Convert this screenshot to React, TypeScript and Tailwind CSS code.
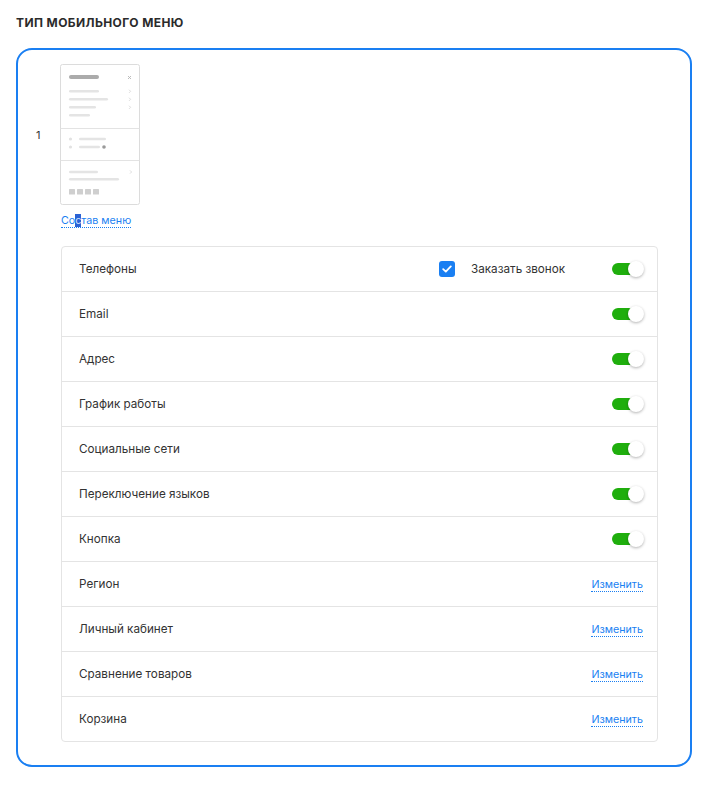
import React from "react"

type RowAction = "toggle" | "edit"

interface MenuRow {
  label: string
  action: RowAction
  callback?: boolean
}

const rows: MenuRow[] = [
  { label: "Телефоны", action: "toggle", callback: true },
  { label: "Email", action: "toggle" },
  { label: "Адрес", action: "toggle" },
  { label: "График работы", action: "toggle" },
  { label: "Социальные сети", action: "toggle" },
  { label: "Переключение языков", action: "toggle" },
  { label: "Кнопка", action: "toggle" },
  { label: "Регион", action: "edit" },
  { label: "Личный кабинет", action: "edit" },
  { label: "Сравнение товаров", action: "edit" },
  { label: "Корзина", action: "edit" },
]

const Switch: React.FC = () => (
  <div className="relative w-[32px] h-[16px] shrink-0">
    <div className="absolute left-0 right-[4px] top-[2px] bottom-[2px] rounded-full bg-[#1fae0d]" />
    <div className="absolute right-0 top-0 w-[16px] h-[16px] rounded-full bg-white shadow-[0_1px_3px_rgba(0,0,0,0.3)]" />
  </div>
)

const Checkbox: React.FC = () => (
  <div className="w-[16px] h-[16px] rounded-[3px] bg-[#1a7ff2] flex items-center justify-center shrink-0">
    <svg width="10" height="8" viewBox="0 0 10 8" fill="none">
      <path d="M1.2 4.2 3.8 6.6 8.8 1.4" stroke="white" strokeWidth="1.8" strokeLinecap="round" strokeLinejoin="round" />
    </svg>
  </div>
)

const Chevron: React.FC<{ x: number; y: number }> = ({ x, y }) => (
  <path d={`M${x} ${y - 1.6} L${x + 1.6} ${y} L${x} ${y + 1.6}`} stroke="#d4d4d4" strokeWidth="0.8" fill="none" />
)

// small sketch of the mobile menu layout
const MenuPreview: React.FC = () => (
  <svg width="80" height="141" viewBox="0 0 80 141" className="block shrink-0">
    <rect x="0.5" y="0.5" width="79" height="140" rx="2" fill="white" stroke="#dcdcdc" />
    <rect x="9" y="11" width="30" height="4" rx="2" fill="#ababab" />
    <path d="M68 12 L71 15 M71 12 L68 15" stroke="#b5b5b5" strokeWidth="0.9" />
    <rect x="9" y="26" width="30" height="2.6" rx="1.3" fill="#e4e4e4" />
    <rect x="9" y="34" width="39" height="2.6" rx="1.3" fill="#e4e4e4" />
    <rect x="9" y="42" width="27" height="2.6" rx="1.3" fill="#e4e4e4" />
    <rect x="9" y="50" width="21" height="2.6" rx="1.3" fill="#e4e4e4" />
    <Chevron x={69} y={27.3} />
    <Chevron x={69} y={35.3} />
    <Chevron x={69} y={43.3} />
    <line x1="0.5" y1="64.5" x2="79.5" y2="64.5" stroke="#e3e3e3" />
    <circle cx="10.5" cy="75" r="1.6" fill="#e2e2e2" />
    <circle cx="10.5" cy="83" r="1.6" fill="#e2e2e2" />
    <rect x="19" y="73.7" width="27" height="2.6" rx="1.3" fill="#e4e4e4" />
    <rect x="19" y="81.7" width="21" height="2.6" rx="1.3" fill="#e4e4e4" />
    <circle cx="44" cy="83" r="1.8" fill="#9a9a9a" />
    <line x1="0.5" y1="96.5" x2="79.5" y2="96.5" stroke="#e3e3e3" />
    <rect x="9" y="106.7" width="29" height="2.6" rx="1.3" fill="#e4e4e4" />
    <Chevron x={70} y={108} />
    <rect x="9" y="114" width="50" height="2.6" rx="1.3" fill="#e4e4e4" />
    <rect x="9" y="125" width="6" height="5.5" rx="0.5" fill="#cfcfcf" />
    <rect x="17" y="125" width="6" height="5.5" rx="0.5" fill="#cfcfcf" />
    <rect x="25" y="125" width="6" height="5.5" rx="0.5" fill="#cfcfcf" />
    <rect x="33" y="125" width="6" height="5.5" rx="0.5" fill="#cfcfcf" />
  </svg>
)

const EditLink: React.FC = () => (
  <a className="block text-[10.7px] leading-[13px] text-[#1a7ff2] border-b border-dotted border-[#1a7ff2] cursor-pointer">
    Изменить
  </a>
)

export default function App() {
  return (
    <div className="bg-white min-h-[787px] font-['Inter','Noto_Sans',sans-serif] text-[#333]">
      <div className="pt-[15px] px-[16px] pb-[21px]">
        <h2 className="text-[12px] leading-[16px] font-bold uppercase tracking-[0.4px] text-[#2b2b2b]">
          Тип мобильного меню
        </h2>
        <div className="mt-[17px] w-[676px] border-2 border-[#1a7ff2] rounded-[16px] pt-[14px] pb-[23px] pr-[32px]">
          <div className="flex items-center">
            <span className="w-[42px] pl-[18px] text-[11px] leading-[14px] text-[#333]">1</span>
            <MenuPreview />
          </div>
          <div className="pl-[42px]">
            <div className="mt-[9px] pl-[1px] leading-[13px] flex">
              <a className="text-[10.7px] leading-[13px] text-[#1a7ff2] border-b border-dotted border-[#1a7ff2] cursor-pointer">
                Со<span className="bg-[#2a62d4] text-[#cfe0ff]">с</span>тав меню
              </a>
            </div>
            <div className="mt-[18px] ml-[1px] border border-[#e4e4e4] rounded-[4px]">
              {rows.map((row, i) => (
                <div
                  key={row.label}
                  className={`flex items-center justify-between pl-[17px] pr-[13px] ${
                    i < rows.length - 1 ? "h-[45px] border-b border-[#e4e4e4]" : "h-[44px]"
                  }`}
                >
                  <span className="text-[11.7px] leading-[16px] text-[#333]">{row.label}</span>
                  {row.action === "toggle" ? (
                    <div className="flex items-center">
                      {row.callback && (
                        <>
                          <Checkbox />
                          <span className="ml-[16px] w-[141px] text-[11.7px] leading-[16px] text-[#333]">
                            Заказать звонок
                          </span>
                        </>
                      )}
                      <Switch />
                    </div>
                  ) : (
                    <div className="pr-[1px] pt-[1px]">
                      <EditLink />
                    </div>
                  )}
                </div>
              ))}
            </div>
          </div>
        </div>
      </div>
    </div>
  )
}
